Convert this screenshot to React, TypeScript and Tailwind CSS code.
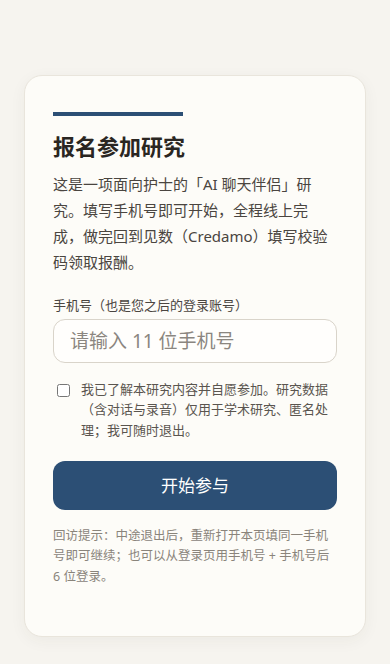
import React from "react";

export default function App() {
  const font = { fontFamily: '"Noto Sans", "Noto Sans CJK SC", sans-serif' };
  return (
    <div className="min-h-screen bg-[#f6f4ef] px-6 pt-[75px] pb-7" style={font}>
      <div className="rounded-[18px] border border-[#e9e5dc] bg-[#fdfcf8] px-7 pt-9 pb-[49px] shadow-[0_4px_16px_rgba(60,50,30,0.05)]">
        <div className="h-1 w-[130px] bg-[#2c4f75]" />
        <h1 className="mt-4 text-[22px] font-bold leading-[28.6px] text-[#2a2622]">报名参加研究</h1>
        <p className="mt-2.5 text-[15px] leading-[26.25px] text-[#4a4540]">
          这是一项面向护士的「AI 聊天伴侣」研究。填写手机号即可开始，全程线上完成，做完回到见数（Credamo）填写校验码领取报酬。
        </p>
        <label className="mt-[19px] block text-[13px] leading-[20px] text-[#4a4540]">手机号（也是您之后的登录账号）</label>
        <input
          type="tel"
          placeholder="请输入 11 位手机号"
          className="mt-1 block h-[44px] w-full rounded-xl border border-[#d9d4ca] bg-[#fffefc] px-4 text-[19px] text-[#2a2622] placeholder:text-[#8b8680] outline-none"
        />
        <label className="mt-4 flex items-start">
          <input type="checkbox" className="ml-1 mt-[5px] h-[13px] w-[13px] shrink-0" />
          <span className="ml-[11px] text-[13px] leading-[20.8px] text-[#5a554f]">
            我已了解本研究内容并自愿参加。研究数据（含对话与录音）仅用于学术研究、匿名处理；我可随时退出。
          </span>
        </label>
        <button className="mt-5 block w-full rounded-xl bg-[#2c4f75] py-3 text-[17px] leading-[25px] text-white">开始参与</button>
        <p className="mt-4 text-[12.5px] leading-[20.4px] text-[#8a847b]">
          回访提示：中途退出后，重新打开本页填同一手机号即可继续；也可以从登录页用手机号 + 手机号后 6 位登录。
        </p>
      </div>
    </div>
  );
}
